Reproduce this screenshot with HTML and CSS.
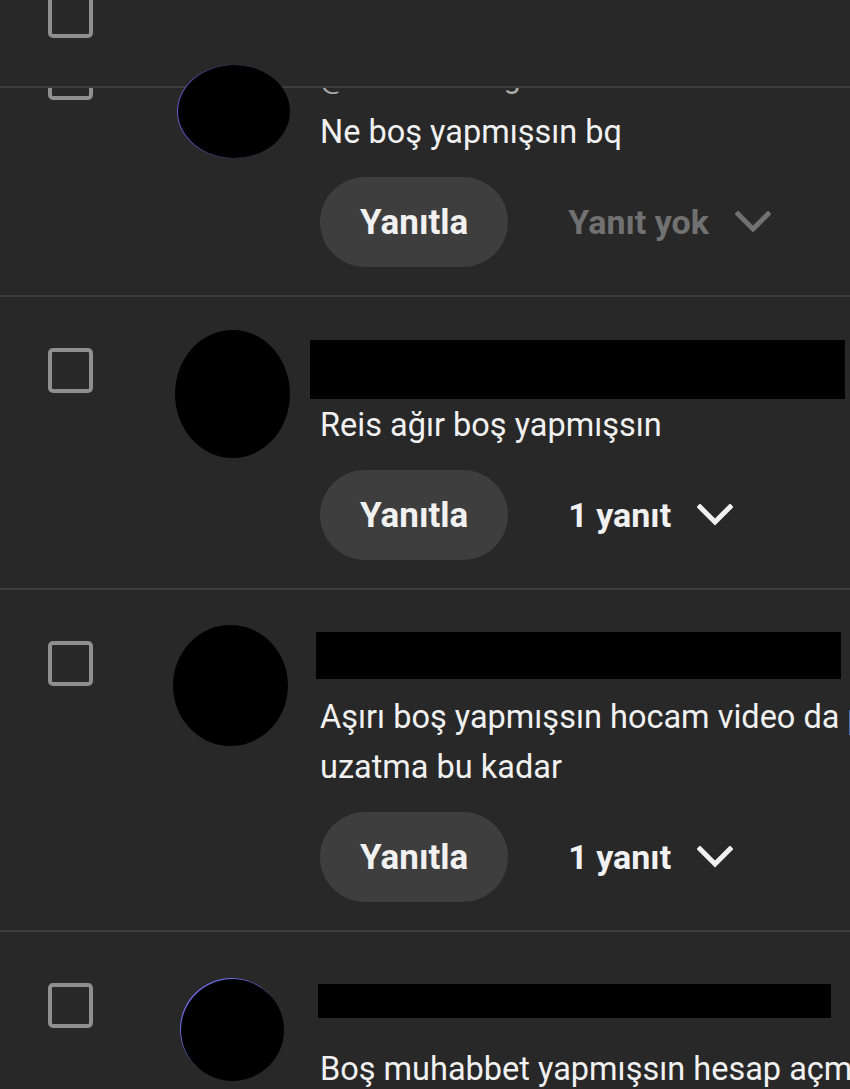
FILE: index.html
```html
<!DOCTYPE html>
<html lang="tr">
<head>
<meta charset="utf-8">
<title>Yorumlar</title>
<link rel="stylesheet" href="styles.css">
</head>
<body>
<div class="page">
  <div class="header">
    <span class="checkbox header-checkbox"></span>
  </div>
  <div class="list">
    <div class="row row-1">
      <span class="checkbox"></span>
      <div class="avatar-col"><span class="avatar av-1"></span></div>
      <div class="content">
        <div class="name-area"><span class="name-text">@kullanıcı · 1 gün önce</span></div>
        <p class="text">Ne boş yapmışsın bq</p>
        <div class="actions">
          <button class="reply-btn">Yanıtla</button>
          <span class="replies muted">Yanıt yok
            <svg class="chev" viewBox="0 0 36 22" width="36" height="22"><polyline points="3,3 18,18 33,3"/></svg>
          </span>
        </div>
      </div>
    </div>
    <div class="row">
      <span class="checkbox"></span>
      <div class="avatar-col"><span class="avatar av-2"></span></div>
      <div class="content">
        <div class="name-area"><span class="redact rd-2"></span></div>
        <p class="text">Reis ağır boş yapmışsın</p>
        <div class="actions">
          <button class="reply-btn">Yanıtla</button>
          <span class="replies">1 yanıt
            <svg class="chev" viewBox="0 0 36 22" width="36" height="22"><polyline points="3,3 18,18 33,3"/></svg>
          </span>
        </div>
      </div>
    </div>
    <div class="row">
      <span class="checkbox"></span>
      <div class="avatar-col"><span class="avatar av-3"></span></div>
      <div class="content">
        <div class="name-area"><span class="redact rd-3"></span></div>
        <p class="text">Aşırı boş yapmışsın hocam video da pek uzatma bu kadar</p>
        <div class="actions">
          <button class="reply-btn">Yanıtla</button>
          <span class="replies">1 yanıt
            <svg class="chev" viewBox="0 0 36 22" width="36" height="22"><polyline points="3,3 18,18 33,3"/></svg>
          </span>
        </div>
      </div>
    </div>
    <div class="row">
      <span class="checkbox"></span>
      <div class="avatar-col"><span class="avatar av-4"></span></div>
      <div class="content">
        <div class="name-area"><span class="redact rd-4"></span></div>
        <p class="text">Boş muhabbet yapmışsın hesap açmışsın</p>
      </div>
    </div>
  </div>
</div>
</body>
</html>
```
FILE: styles.css
```css
* { box-sizing: border-box; }
html, body {
  margin: 0;
  padding: 0;
  background: #282828;
  font-family: Roboto, "Noto Sans", "Liberation Sans", sans-serif;
  color: #f1f1f1;
}
body { overflow: hidden; }
.page {
  position: relative;
  width: 850px;
  height: 1089px;
  overflow: hidden;
}
.header {
  position: absolute;
  top: 0;
  left: 0;
  right: 0;
  height: 88px;
  background: #282828;
  border-bottom: 2px solid #3d3d3d;
  z-index: 2;
  padding-left: 48px;
}
.header-checkbox {
  margin-top: -7px;
}
.checkbox {
  display: block;
  flex: none;
  width: 45px;
  height: 45px;
  border: 4px solid #8f8f8f;
  border-radius: 5px;
}
.list {
  padding-top: 5px;
}
.row {
  display: flex;
  align-items: flex-start;
  padding-left: 48px;
  border-bottom: 2px solid #3d3d3d;
  padding-bottom: 28px;
}
.row > .checkbox {
  margin-top: 51px;
}
.row-1 > .checkbox { margin-top: 50px; }
.avatar-col {
  flex: none;
  width: 119px;
  margin-left: 80px;
  display: flex;
  justify-content: center;
}
.avatar {
  display: block;
  background: #000;
  border-radius: 50%;
}
.av-1 { width: 112px; height: 93px; margin-top: 60px; margin-left: 2px; position: relative; z-index: 3; box-shadow: -1px 0 0 #6a5acd; }
.av-2 { width: 115px; height: 128px; margin-top: 33px; }
.av-3 { width: 115px; height: 121px; margin-top: 35px; margin-left: -4px; }
.av-4 { width: 103px; height: 102px; margin-top: 47px; box-shadow: -1px -1px 0 #6b6be0; }
.content {
  flex: none;
  width: 640px;
  margin-left: 28px;
  padding-top: 43px;
}
.row-1 .content { padding-top: 42px; }
.name-area {
  height: 60px;
  position: relative;
}
.name-text {
  display: block;
  font-size: 30px;
  line-height: 34px;
  padding-top: 14px;
  color: #aaaaaa;
}
.redact {
  display: block;
  background: #000;
}
.rd-2 { width: 535px; height: 59px; margin-left: -10px; }
.rd-3 { width: 525px; height: 47px; margin-left: -4px; margin-top: -1px; }
.rd-4 { width: 513px; height: 34px; margin-left: -2px; margin-top: 9px; }
.text {
  margin: 0;
  font-size: 32.5px;
  line-height: 50px;
  color: #f1f1f1;
  width: 600px;
}
.row:last-child .text { white-space: nowrap; }
.actions {
  display: flex;
  align-items: center;
  margin-top: 20px;
  height: 90px;
}
.reply-btn {
  height: 90px;
  padding: 0 40px;
  border: none;
  border-radius: 45px;
  background: #3e3e3e;
  color: #f1f1f1;
  font-family: inherit;
  font-size: 35px;
  font-weight: 700;
}
.replies {
  display: flex;
  align-items: center;
  gap: 26px;
  margin-left: 60px;
  font-size: 34px;
  font-weight: 700;
  color: #f1f1f1;
}
.replies.muted { color: #717171; }
.chev {
  display: block;
  fill: none;
  stroke: currentColor;
  stroke-width: 5;
  stroke-linecap: square;
}
```
